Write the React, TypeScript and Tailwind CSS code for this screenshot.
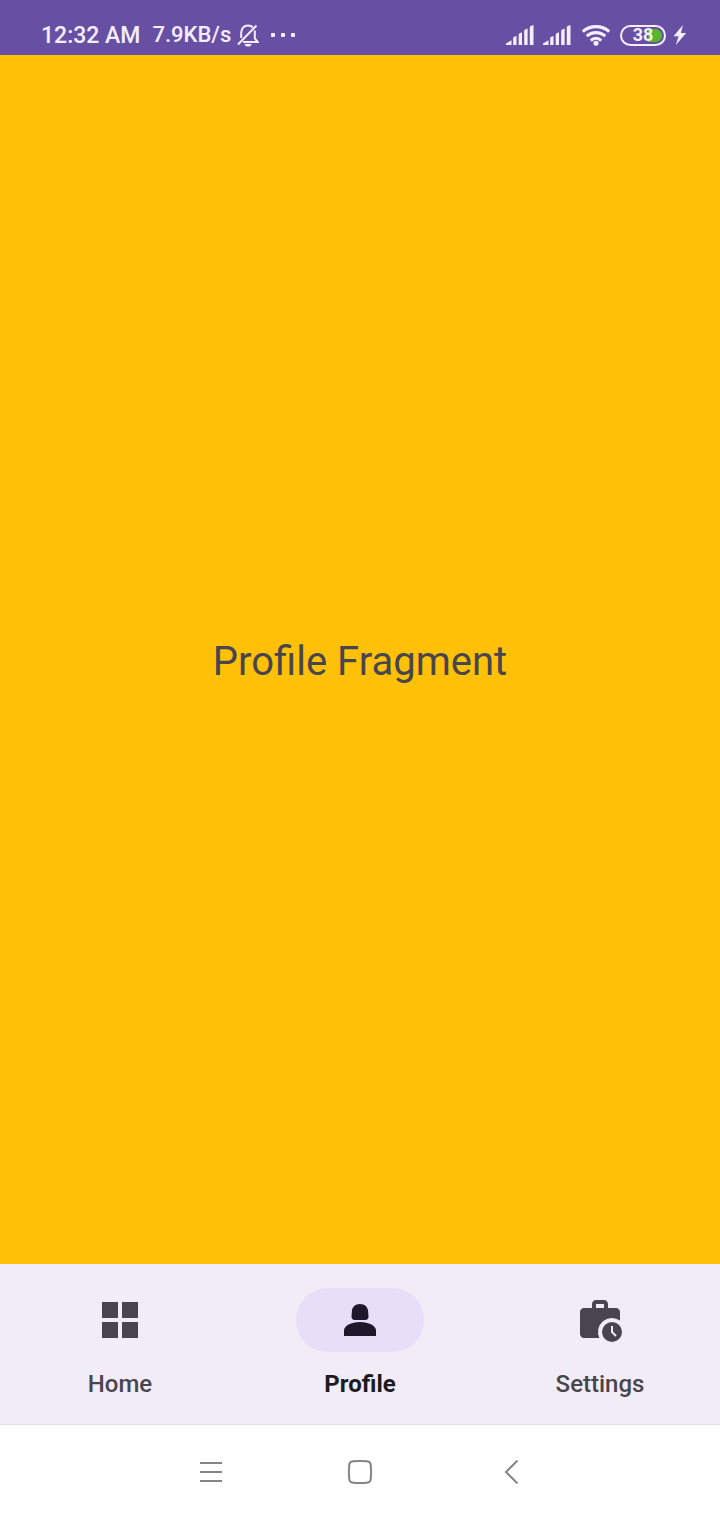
import { useState, type ReactNode } from "react";

function BellOffIcon() {
  return (
    <svg width="22" height="24" viewBox="0 0 22 24" fill="none" stroke="currentColor" strokeWidth="2" aria-hidden="true">
      <path d="M4.200 15V9.800C4.200 5.600 7 2.400 11 2.400C13 2.400 14.600 3.100 15.800 4.400M17.800 7.500V15.400L20.600 18.900H6" />
      <path d="M1 21.500L19.500 2.500" />
      <path d="M7.500 20.900H14.700C14 22.700 12.900 23.500 11.100 23.500S8.200 22.700 7.500 20.900Z" fill="currentColor" stroke="none" />
    </svg>
  );
}

function SignalIcon() {
  return (
    <svg width="28" height="20" viewBox="0 0 28 20" fill="currentColor" aria-hidden="true">
      <path d="M0 20V18.600L5.500 15.200V20ZM7.200 20V13Q7.400 12.200 8.200 11.800L10.500 10.900V20ZM12.700 20V9.400Q12.900 8.500 13.700 8.200L16 7.200V20ZM18.200 20V5.700Q18.400 4.800 19.200 4.500L21.600 3.500V20ZM23.800 20V2.200Q24 1.200 24.800 0.900L27.500 0V20Z" />
    </svg>
  );
}

function WifiIcon() {
  return (
    <svg width="30" height="22" viewBox="0 0 30 22" fill="none" stroke="currentColor" strokeWidth="3.100" aria-hidden="true">
      <path d="M1.800 7.600C9.200 0.900 20.800 0.900 28.200 7.600" />
      <path d="M5.800 12.200C11 7.400 19 7.400 24.200 12.200" />
      <path d="M9.800 16.600C12.900 13.600 17.100 13.600 20.200 16.600" />
      <circle cx="15" cy="19.200" r="2.500" fill="currentColor" stroke="none" />
    </svg>
  );
}

function BoltIcon() {
  return (
    <svg width="14" height="20" viewBox="0 0 14 20" fill="currentColor" aria-hidden="true">
      <path d="M10 0L0.500 11.200H5.600L2.800 20L13.200 8H7.900Z" />
    </svg>
  );
}

function Battery({ level }: { level: number }) {
  return (
    <div className="relative flex h-[21px] w-[46px] items-center justify-center rounded-full border-2 border-current">
      <span className="absolute right-[2px] h-[13px] w-[14px] rounded-r-full bg-[#56b52a]" />
      <span className="relative text-[18px] leading-none font-bold">{level}</span>
    </div>
  );
}

function StatusBar() {
  return (
    <header className="flex h-[55px] items-center justify-between bg-[#6750a4] pt-[15px] pr-[33px] pl-[41px] text-[#f5eeff]">
      <div className="flex items-center leading-none font-medium">
        <span className="text-[23px]">12:32 AM</span>
        <span className="ml-3 text-[22px]">7.9KB/s</span>
        <span className="ml-[6px]">
          <BellOffIcon />
        </span>
        <span className="ml-[12px] flex gap-[6px]">
          <i className="size-[4px] rounded-[1px] bg-current" />
          <i className="size-[4px] rounded-[1px] bg-current" />
          <i className="size-[4px] rounded-[1px] bg-current" />
        </span>
      </div>
      <div className="flex items-center">
        <SignalIcon />
        <span className="ml-[9px]">
          <SignalIcon />
        </span>
        <span className="ml-[10px]">
          <WifiIcon />
        </span>
        <span className="ml-[9px]">
          <Battery level={38} />
        </span>
        <span className="ml-[7px]">
          <BoltIcon />
        </span>
      </div>
    </header>
  );
}

function HomeIcon() {
  return (
    <svg width="48" height="48" viewBox="0 0 48 48" fill="currentColor" aria-hidden="true">
      <path d="M6 6H22V22H6ZM26 6H42V22H26ZM6 26H22V42H6ZM26 26H42V42H26Z" />
    </svg>
  );
}

function ProfileIcon() {
  return (
    <svg width="48" height="48" viewBox="0 0 48 48" fill="currentColor" aria-hidden="true">
      <path d="M24 8C19.400 8 16.200 10.800 15.900 15L15.500 20.500C15.400 22.800 16.800 24 18.600 24H29.400C31.200 24 32.600 22.800 32.500 20.500L32.100 15C31.800 10.800 28.600 8 24 8Z" />
      <path d="M8 40V34.500C8 29.800 15 26 24 26S40 29.800 40 34.500V40Z" />
    </svg>
  );
}

function SettingsIcon() {
  return (
    <svg width="48" height="48" viewBox="0 0 48 48" fill="currentColor" aria-hidden="true">
      <path
        fillRule="evenodd"
        d="M16 8V12H8C5.800 12 4 13.800 4 16V38C4 40.200 5.800 42 8 42H23.350A14 14 0 0 1 44 24.500V16C44 13.800 42.200 12 40 12H32V8C32 5.800 30.200 4 28 4H20C17.800 4 16 5.800 16 8ZM20 8V12H28V8Z"
      />
      <path
        fillRule="evenodd"
        d="M36 26A10 10 0 1 0 36 46A10 10 0 1 0 36 26ZM35 30H37V35.600L40.700 39.300L39.300 40.700L35 36.400Z"
      />
    </svg>
  );
}

const tabs: { name: string; icon: ReactNode }[] = [
  { name: "Home", icon: <HomeIcon /> },
  { name: "Profile", icon: <ProfileIcon /> },
  { name: "Settings", icon: <SettingsIcon /> },
];

export default function App() {
  const [active, setActive] = useState("Profile");

  return (
    <div className="flex min-h-screen flex-col font-[Roboto,sans-serif]">
      <StatusBar />
      <main className="flex flex-1 items-center justify-center bg-[#ffc107] pt-1">
        <h1 className="text-[40px] leading-[48px] text-[#49454f]">{active} Fragment</h1>
      </main>
      <nav className="grid grid-cols-3 bg-[#f2ecf7]">
        {tabs.map(({ name, icon }) => {
          const selected = name === active;
          return (
            <button
              key={name}
              type="button"
              aria-current={selected ? "page" : undefined}
              onClick={() => setActive(name)}
              className={
                selected
                  ? "flex flex-col items-center gap-4 py-6 font-bold text-[#1c1b1f]"
                  : "flex flex-col items-center gap-4 py-6 font-medium text-[#49454f]"
              }
            >
              <span
                className={
                  selected
                    ? "flex h-16 w-32 items-center justify-center rounded-full bg-[#e8def8] text-[#1d192b]"
                    : "flex h-16 w-32 items-center justify-center rounded-full"
                }
              >
                {icon}
              </span>
              <span className="text-2xl">{name}</span>
            </button>
          );
        })}
      </nav>
      <footer className="grid h-24 grid-cols-3 border-t border-[#e2dfe5] bg-white px-[18.75%] pb-[2px] text-[#858585]">
        <button type="button" aria-label="Recent apps" className="flex items-center justify-center">
          <svg width="24" height="24" viewBox="0 0 24 24" stroke="currentColor" strokeWidth="2" aria-hidden="true">
            <path d="M2 3H24M2 12H24M2 21H24" />
          </svg>
        </button>
        <button type="button" aria-label="Home screen" className="flex items-center justify-center">
          <svg width="26" height="26" viewBox="0 0 26 26" fill="none" stroke="currentColor" strokeWidth="2" aria-hidden="true">
            <path d="M6 2.200Q13 1.600 20 2.200Q23.500 2.500 23.800 6Q24.400 13 23.800 20Q23.500 23.500 20 23.800Q13 24.400 6 23.800Q2.500 23.500 2.200 20Q1.600 13 2.200 6Q2.500 2.500 6 2.200Z" />
          </svg>
        </button>
        <button type="button" aria-label="Back" className="flex items-center justify-center">
          <svg width="24" height="24" viewBox="0 0 24 24" fill="none" stroke="currentColor" strokeWidth="2" aria-hidden="true">
            <path d="M19.500 0.500L8 12L19.500 23.500" />
          </svg>
        </button>
      </footer>
    </div>
  );
}
